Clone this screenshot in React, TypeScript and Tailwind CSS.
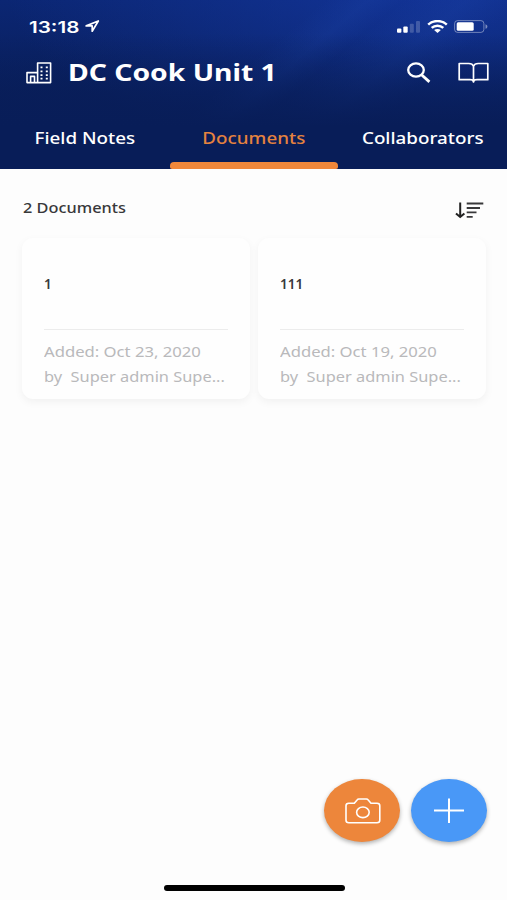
const documents = [
  { title: "1", added: "Added: Oct 23, 2020", by: "by\u00a0 Super admin Supe..." },
  { title: "111", added: "Added: Oct 19, 2020", by: "by\u00a0 Super admin Supe..." },
]

function StatusBar() {
  return (
    <div className="flex h-[53px] items-center justify-between pl-[29px] pr-[18px]">
      <div className="flex items-center">
        <div className="w-[56px] font-['Inter'] text-[16px] font-semibold leading-none">
          <span className="inline-block origin-left scale-x-[1.29]">13:18</span>
        </div>
        <svg width="15" height="13" viewBox="0 0 15 13" fill="none" stroke="currentColor" strokeWidth="1.7" strokeLinejoin="round">
          <path d="M1.2 5.9 13.3 1 7.2 11.2V5.9Z" />
        </svg>
      </div>
      <div className="flex items-center">
        <svg width="24" height="12" viewBox="0 0 24 12" fill="#fff">
          <rect x="0" y="7.5" width="4.4" height="4.3" rx="1" />
          <rect x="6.3" y="5.4" width="4.4" height="6.4" rx="1" />
          <rect x="12.8" y="2.8" width="4" height="9" rx="1" opacity="0.2" />
          <rect x="19" y="0" width="4" height="11.8" rx="1" opacity="0.2" />
        </svg>
        <svg className="ml-[6px]" width="21" height="13" viewBox="0 0 21 13" fill="none" stroke="#fff" strokeWidth="2.5">
          <path d="M1.2 4.6C6.3 -.1 14.7 -.1 19.8 4.6" />
          <path d="M4.7 7.9C7.9 5 13.1 5 16.3 7.9" />
          <path d="M7.1 10.1C9 8.6 12 8.6 13.9 10.1L10.5 13Z" fill="#fff" stroke="none" />
        </svg>
        <svg className="ml-[6px]" width="35" height="13" viewBox="0 0 35 13">
          <rect x=".6" y=".6" width="29.3" height="11.8" rx="3" fill="none" stroke="#fff" strokeOpacity=".4" />
          <rect x="2.7" y="2.3" width="17" height="8.4" rx="1.5" fill="#fff" />
          <path d="M31.5 4.2c2.5.9 2.5 3.7 0 4.6Z" fill="#fff" opacity=".45" />
        </svg>
      </div>
    </div>
  )
}

function TitleBar() {
  return (
    <div className="flex h-[39px] items-center pl-[26px] pr-[18px]">
      <svg width="26" height="22" viewBox="0 0 26 22" fill="none" stroke="currentColor" strokeWidth="1.6" strokeLinejoin="round">
        <path d="M1 20.6V10.6H11.6V1H24.6V20.6ZM11.6 10.6V20.6M4.6 20V14.4H8.5V20" />
        <path d="M14.5 5.4h2M19.8 5.4h2M14.5 9.3h2M19.8 9.3h2M14.5 13.1h2M19.8 13.1h2M14.5 16.7h2M19.8 16.7h2" strokeWidth="1.8" />
      </svg>
      <h1 className="ml-[16px] flex-1 whitespace-nowrap text-[23px] font-bold leading-none">
        <span className="inline-block origin-left scale-x-[1.23]">DC Cook Unit 1</span>
      </h1>
      <svg width="26" height="22" viewBox="0 0 26 22" fill="none" stroke="currentColor">
        <ellipse cx="10" cy="8" rx="7.8" ry="6.6" strokeWidth="2.3" />
        <path d="m15.8 13 7.6 6.9" strokeWidth="2.8" />
      </svg>
      <svg className="ml-[26px]" width="31" height="22" viewBox="0 0 31 22" fill="none" stroke="currentColor" strokeWidth="1.7" strokeLinejoin="round">
        <path d="M15.5 4.3C14.8 2.3 13.2 1.5 10.8 1.5H1.2V17.7H12c2 0 3.5.8 3.5 2.3 0-1.5 1.5-2.3 3.5-2.3h10.8V1.5H20.2c-2.4 0-4 .8-4.7 2.8ZM15.5 4.3V20" />
      </svg>
    </div>
  )
}

function App() {
  return (
    <main className="relative h-[900px] w-[507px] overflow-hidden bg-[#fdfdfd] font-['Noto_Sans',sans-serif]">
      <header className="h-[169px] bg-[linear-gradient(180deg,transparent_20%,#081d58_75%),linear-gradient(140deg,transparent_46%,#2450b826_52%,transparent_57%,#2450b826_66%,transparent_74%),radial-gradient(ellipse_at_85%_-10%,#1437a0cc_0%,#12349100_70%),linear-gradient(180deg,#0b2673_0%,#091f5c_55%,#081d58_100%)] text-white">
        <StatusBar />
        <TitleBar />
        {/* tabs */}
        <nav className="grid h-[77px] grid-cols-[170px_168px_169px] text-[16px] font-medium leading-none">
          <div className="flex flex-col items-center pt-[38px]">
            <span className="scale-x-[1.175]">Field Notes</span>
          </div>
          <div className="flex flex-col items-center justify-between pt-[38px] text-[#e5823f]">
            <span className="scale-x-[1.175]">Documents</span>
            <div className="h-[7px] w-full rounded-t-[4px] rounded-bl-[2px] rounded-br-[2px] bg-[#f0873a]"></div>
          </div>
          <div className="flex flex-col items-center pt-[38px]">
            <span className="scale-x-[1.175]">Collaborators</span>
          </div>
        </nav>
      </header>

      {/* count and sort */}
      <div className="flex h-[69px] items-start justify-between pl-[23px] pr-[23px] text-[#38383a]">
        <span className="mt-[32px] origin-left scale-x-[1.165] text-[14px] font-medium leading-none">2 Documents</span>
        <svg className="mt-[33px]" width="29" height="17" viewBox="0 0 29 17" fill="none" stroke="currentColor" strokeWidth="2">
          <path d="M5.2 .5V14.5M1 11.4l4.2 3.6 4.2-3.6" stroke="#222" />
          <path d="M11.7 1.5H28.3M11.7 6H25M11.7 10.3H21.5M11.7 14.8H17.7" strokeWidth="1.8" />
        </svg>
      </div>

      {/* document cards */}
      <div className="flex gap-[8px] pl-[22px]">
        {documents.map((doc) => (
          <div key={doc.title} className="h-[161px] w-[228px] rounded-[11px] bg-[#fefefe] px-[22px] shadow-[0_3px_8px_rgba(0,0,0,0.05)]">
            <div className="h-[92px] border-b border-[#ececec] pt-[38px] text-[15px] font-semibold leading-none text-[#38383a]">
              <span className="inline-block origin-left scale-x-[0.9]">{doc.title}</span>
            </div>
            <div className="whitespace-nowrap pt-[9px] text-[14px] leading-[25px] text-[#b9b9bb]">
              <p className="origin-left scale-x-[1.19]">{doc.added}</p>
              <p className="origin-left scale-x-[1.17]">{doc.by}</p>
            </div>
          </div>
        ))}
      </div>

      {/* floating buttons */}
      <div className="absolute left-[324px] top-[779px] flex gap-[11px]">
        <button className="flex h-[63px] w-[76px] items-center justify-center rounded-[50%] bg-[#ed863b] pl-px shadow-[0_2px_4px_rgba(0,0,0,0.3)]">
          <svg width="36" height="26" viewBox="0 0 36 26" fill="none" stroke="#fff" strokeWidth="1.6" strokeLinejoin="round">
            <path d="M3.8 5.3H9.3L12.3 1.7Q12.8 1 13.8 1H21.5Q22.5 1 23 1.7L26 5.3H32Q34.8 5.3 34.8 7.8V22.3Q34.8 24.7 32 24.7H3.8Q1 24.7 1 22.3V7.8Q1 5.3 3.8 5.3Z" />
            <ellipse cx="17.9" cy="14.3" rx="6.3" ry="5.3" />
          </svg>
        </button>
        <button className="flex h-[63px] w-[76px] items-center justify-center rounded-[50%] bg-[#4998f7] shadow-[0_2px_4px_rgba(0,0,0,0.3)]">
          <svg width="30" height="26" viewBox="0 0 30 26" fill="none" stroke="#fff" strokeWidth="2">
            <path d="M0 12.5H30M15 .5V25" />
          </svg>
        </button>
      </div>

      {/* home indicator */}
      <div className="absolute left-[164px] top-[885px] h-[6px] w-[181px] rounded-full bg-black"></div>
    </main>
  )
}

export default App
